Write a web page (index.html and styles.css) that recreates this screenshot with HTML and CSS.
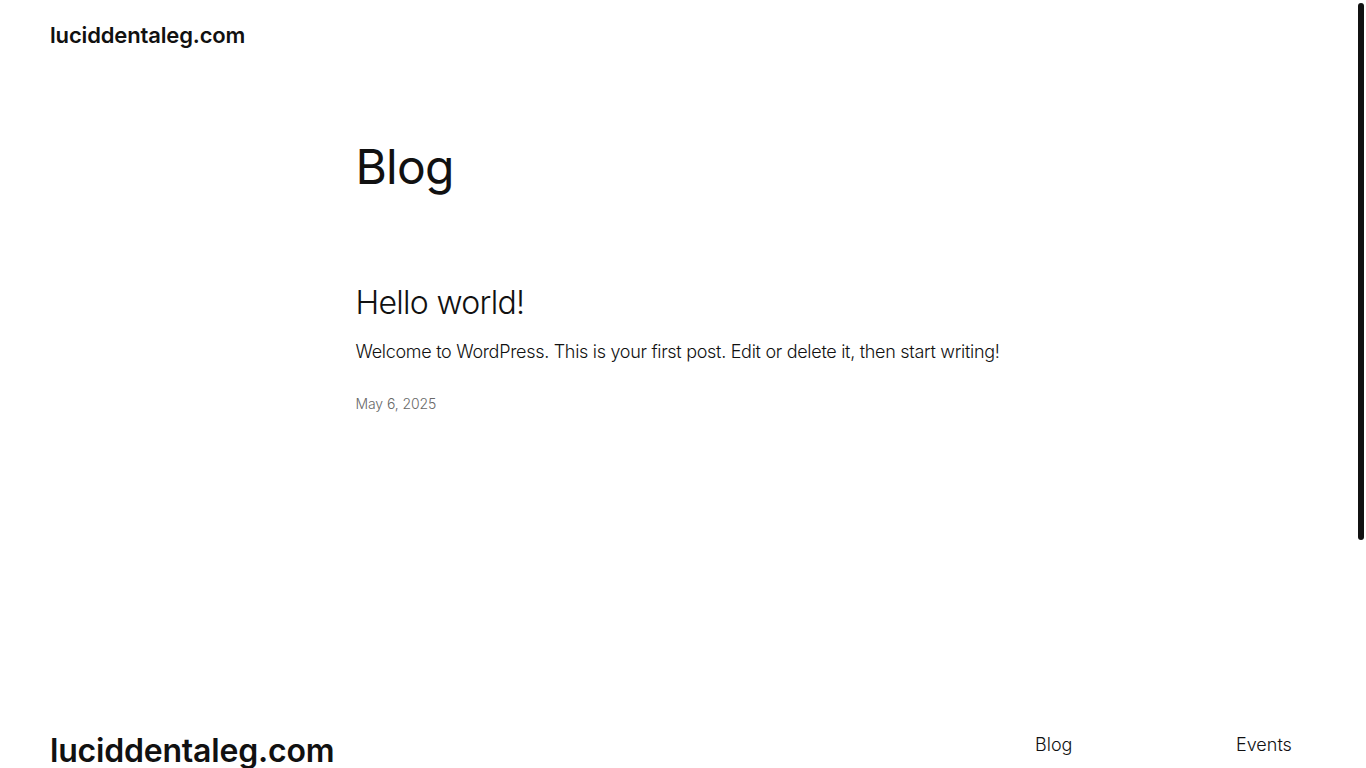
FILE: index.html
```html
<!DOCTYPE html>
<html lang="en">
<head>
<meta charset="utf-8">
<title>Blog – luciddentaleg.com</title>
<link rel="stylesheet" href="styles.css">
</head>
<body>
<div class="frame">
  <div class="page">
    <header class="site-header">
      <a class="site-title" href="#">luciddentaleg.com</a>
    </header>
    <main class="main">
      <h1 class="page-title">Blog</h1>
      <article class="post">
        <h2 class="post-title"><a href="#">Hello world!</a></h2>
        <p class="post-excerpt">Welcome to WordPress. This is your first post. Edit or delete it, then start writing!</p>
        <div class="post-date">May 6, 2025</div>
      </article>
    </main>
    <footer class="site-footer">
      <a class="footer-title" href="#">luciddentaleg.com</a>
      <nav class="footer-nav">
        <ul class="nav-col nav-col-1">
          <li><a href="#">Blog</a></li>
          <li><a href="#">About</a></li>
          <li><a href="#">FAQs</a></li>
          <li><a href="#">Authors</a></li>
        </ul>
        <ul class="nav-col nav-col-2">
          <li><a href="#">Events</a></li>
          <li><a href="#">Shop</a></li>
          <li><a href="#">Patterns</a></li>
          <li><a href="#">Themes</a></li>
        </ul>
      </nav>
    </footer>
  </div>
  <div class="scrolltrack"><div class="scrollthumb"></div></div>
</div>
</body>
</html>
```
FILE: styles.css
```css
html, body {
  margin: 0;
  padding: 0;
  height: 100%;
  overflow: hidden;
  background: #ffffff;
}
body {
  font-family: Inter, "Noto Sans", "Liberation Sans", sans-serif;
  color: #111111;
  font-weight: 300;
}
a {
  color: inherit;
  text-decoration: none;
}
.frame {
  display: flex;
  height: 768px;
  overflow: hidden;
}
.page {
  flex: 1;
  min-width: 0;
}
.scrolltrack {
  width: 10px;
  flex: none;
  padding: 3px 2px 0 2px;
  box-sizing: border-box;
}
.scrollthumb {
  width: 6px;
  height: 537px;
  background: #111111;
  border-radius: 3px;
}
.site-header {
  padding: 21px 50px 0 50px;
  height: 49px;
  box-sizing: border-box;
}
.site-title {
  font-size: 22px;
  font-weight: 600;
  letter-spacing: -0.15px;
  line-height: 28px;
}
.main {
  width: 645px;
  margin: 0 auto;
  padding-top: 89px;
  height: 651px;
  box-sizing: border-box;
}
.page-title {
  margin: 0;
  font-size: 48px;
  font-weight: 400;
  letter-spacing: -0.8px;
  line-height: 58px;
}
.post {
  margin-top: 87px;
}
.post-title {
  margin: 0;
  font-size: 32px;
  font-weight: 300;
  letter-spacing: -0.7px;
  line-height: 40px;
}
.post-excerpt {
  margin: 15px 0 0 0;
  font-size: 18px;
  font-weight: 300;
  letter-spacing: -0.3px;
  line-height: 27px;
}
.post-date {
  margin-top: 29px;
  font-size: 14px;
  color: #686868;
  letter-spacing: -0.1px;
  line-height: 20px;
}
.site-footer {
  display: flex;
  justify-content: space-between;
  align-items: flex-start;
  padding: 0 50px;
  height: 300px;
}
.footer-title {
  font-size: 32px;
  font-weight: 600;
  letter-spacing: -0.2px;
  line-height: 40px;
  margin-top: 31px;
}
.footer-nav {
  display: flex;
  margin-top: 33px;
}
.nav-col {
  list-style: none;
  margin: 0;
  padding: 0;
  display: flex;
  flex-direction: column;
  gap: 10px;
  font-size: 18px;
  font-weight: 300;
  line-height: 24px;
}
.nav-col-1 {
  width: 201px;
}
.nav-col-2 {
  width: 70px;
}
```
